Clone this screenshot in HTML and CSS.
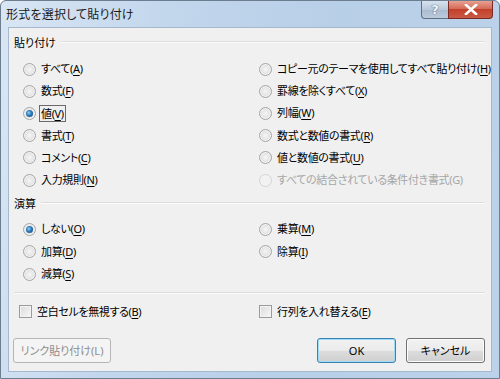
FILE: index.html
```html
<!DOCTYPE html>
<html lang="ja">
<head>
    <meta charset="UTF-8">
    <meta name="viewport" content="width=device-width, initial-scale=1.0">
    <title>形式を選択して貼り付け</title>
    <link rel="stylesheet" href="styles.css">
</head>
<body>
    <div class="window">
        <div class="titlebar">
            <span class="title">形式を選択して貼り付け</span>
            <div class="caption-buttons">
                <span class="cap-btn help">?</span>
                <span class="cap-btn close">
                    <svg width="14" height="11" viewBox="0 0 14 11">
                        <path d="M2 1 L12 10 M12 1 L2 10" stroke="#fff" stroke-width="2.6" stroke-linecap="square"/>
                    </svg>
                </span>
            </div>
        </div>

        <div class="client">
            <div class="group-title first">貼り付け</div>
            <div class="options paste">
                <label class="opt"><span class="radio"></span><span>すべて(<u>A</u>)</span></label>
                <label class="opt"><span class="radio"></span><span>コピー元のテーマを使用してすべて貼り付け(<u>H</u>)</span></label>
                <label class="opt"><span class="radio"></span><span>数式(<u>F</u>)</span></label>
                <label class="opt"><span class="radio"></span><span>罫線を除くすべて(<u>X</u>)</span></label>
                <label class="opt"><span class="radio checked"></span><span class="focus">値(<u>V</u>)</span></label>
                <label class="opt"><span class="radio"></span><span>列幅(<u>W</u>)</span></label>
                <label class="opt"><span class="radio"></span><span>書式(<u>T</u>)</span></label>
                <label class="opt"><span class="radio"></span><span>数式と数値の書式(<u>R</u>)</span></label>
                <label class="opt"><span class="radio"></span><span>コメント(<u>C</u>)</span></label>
                <label class="opt"><span class="radio"></span><span>値と数値の書式(<u>U</u>)</span></label>
                <label class="opt"><span class="radio"></span><span>入力規則(<u>N</u>)</span></label>
                <label class="opt disabled"><span class="radio"></span><span>すべての結合されている条件付き書式(G)</span></label>
            </div>

            <div class="group-title second">演算</div>
            <div class="options ops">
                <label class="opt"><span class="radio checked"></span><span>しない(<u>O</u>)</span></label>
                <label class="opt"><span class="radio"></span><span>乗算(<u>M</u>)</span></label>
                <label class="opt"><span class="radio"></span><span>加算(<u>D</u>)</span></label>
                <label class="opt"><span class="radio"></span><span>除算(<u>I</u>)</span></label>
                <label class="opt"><span class="radio"></span><span>減算(<u>S</u>)</span></label>
            </div>

            <div class="separator"></div>

            <div class="options checks">
                <label class="opt"><span class="checkbox"></span><span>空白セルを無視する(<u>B</u>)</span></label>
                <label class="opt"><span class="checkbox"></span><span>行列を入れ替える(<u>E</u>)</span></label>
            </div>

            <div class="buttons">
                <button class="btn link" disabled>リンク貼り付け(L)</button>
                <div class="spacer"></div>
                <button class="btn default">OK</button>
                <button class="btn">キャンセル</button>
            </div>
        </div>
    </div>
</body>
</html>
```

FILE: styles.css
```css
html, body {
    margin: 0;
    padding: 0;
}
body {
    font-family: "Noto Sans", "Noto Sans CJK JP", sans-serif;
    font-size: 11px;
    color: #000;
    font-feature-settings: "palt";
}
.window {
    width: 500px;
    height: 379px;
    box-sizing: border-box;
    border: 1px solid #6d7d90;
    border-radius: 6px 6px 0 0;
    background: linear-gradient(100deg, #d9e6f4 0%, #c2d6ec 30%, #b8cfe8 60%, #bcd2ea 100%);
    display: flex;
    flex-direction: column;
    overflow: hidden;
}
.titlebar {
    height: 26px;
    display: flex;
    align-items: flex-start;
    justify-content: space-between;
    flex-shrink: 0;
}
.title {
    padding: 5px 0 0 5px;
    line-height: 16px;
    font-family: "Noto Sans CJK JP", sans-serif;
    font-size: 12px;
    color: #1a1a1a;
    letter-spacing: 0.2px;
}
.caption-buttons {
    display: flex;
    margin-right: 6px;
}
.cap-btn {
    height: 18px;
    display: flex;
    align-items: center;
    justify-content: center;
    box-sizing: border-box;
    border: 1px solid #5e6f84;
    border-top: none;
}
.help {
    width: 27px;
    border-radius: 0 0 0 4px;
    border-right: none;
    background: linear-gradient(#d7e2ee, #b9c9da 50%, #a9bbcf 51%, #bccbdc);
    color: #f4f8fb;
    font-family: "DejaVu Sans", sans-serif;
    font-weight: bold;
    font-size: 13px;
    text-shadow: 0 0 1px #4a5c72, 0 0 1px #4a5c72;
}
.close {
    width: 45px;
    border-radius: 0 0 4px 0;
    border-color: #7a2a22;
    background: linear-gradient(#e8a192, #d46b58 45%, #c4402b 50%, #c85a44 100%);
}
.client {
    flex: 1;
    margin: 0 7px 6px 7px;
    border: 1px solid #a5b8cd;
    background: #f0f0f0;
    padding: 0 6px 0 5px;
    display: flex;
    flex-direction: column;
}
.group-title {
    display: flex;
    align-items: center;
    height: 16px;
    gap: 5px;
    font-family: "Noto Sans CJK JP", sans-serif;
}
.group-title.first {
    margin-top: 6px;
}
.group-title.second {
    margin-top: 4px;
}
.group-title::after {
    content: "";
    flex: 1;
    height: 0;
    border-top: 1px solid #dcdcdc;
    border-bottom: 1px solid #fcfcfc;
}
.options {
    display: grid;
    grid-template-columns: 236px 1fr;
    padding-left: 9px;
}
.paste {
    margin-top: 8px;
    grid-auto-rows: 22.2px;
}
.ops {
    margin-top: 7px;
    grid-auto-rows: 22.5px;
}
.checks {
    margin-top: 9px;
    grid-auto-rows: 18px;
}
.opt {
    display: flex;
    align-items: center;
    gap: 4px;
    white-space: nowrap;
    line-height: 16px;
    letter-spacing: -0.35px;
}
.opt u {
    text-decoration-thickness: 1px;
    text-underline-offset: 2px;
}
.opt.disabled {
    color: #a6a6a6;
}
.radio {
    width: 13px;
    height: 13px;
    box-sizing: border-box;
    border-radius: 50%;
    border: 1px solid #a5a5a5;
    background: radial-gradient(circle at 50% 50%, #f6f6f6 0%, #e3e3e3 55%, #d2d2d2 100%);
    box-shadow: inset 0 0 0 1px #f4f4f4;
    position: relative;
    flex-shrink: 0;
    margin-right: 1px;
}
.disabled .radio {
    border-color: #d4d4d4;
    background: #f2f2f2;
    box-shadow: none;
}
.radio.checked::after {
    content: "";
    position: absolute;
    left: 2px;
    top: 2px;
    width: 7px;
    height: 7px;
    border-radius: 50%;
    background: radial-gradient(circle at 40% 40%, #8fd0f4 0%, #2c79b8 45%, #123e70 100%);
}
.focus {
    border: 1px solid #6a6a6a;
    padding: 0 1px;
    margin-left: -2px;
    line-height: 15px;
}
.checkbox {
    width: 13px;
    height: 13px;
    box-sizing: border-box;
    border: 1px solid #9a9a9a;
    background: linear-gradient(135deg, #dcdcdc, #f6f6f6);
    box-shadow: inset 0 0 0 1px #f4f4f4;
    margin-right: 1px;
    flex-shrink: 0;
}
.checks .opt:first-child {
    margin-left: -4px;
}
.separator {
    margin-top: 6px;
    border-top: 1px solid #dcdcdc;
    border-bottom: 1px solid #fcfcfc;
}
.buttons {
    display: flex;
    align-items: center;
    gap: 10px;
    margin-top: 17px;
}
.spacer {
    flex: 1;
}
.btn {
    height: 25px;
    box-sizing: border-box;
    font-family: "Noto Sans", "Noto Sans CJK JP", sans-serif;
    font-feature-settings: "palt";
    font-size: 11px;
    border: 1px solid #707070;
    border-radius: 3px;
    background: linear-gradient(#f2f2f2 0%, #ebebeb 50%, #dddddd 51%, #cfcfcf 100%);
    box-shadow: inset 0 0 0 1px #fcfcfc;
    width: 79px;
    padding: 0;
    color: #000;
}
.btn.link {
    width: 98px;
    margin-left: -1px;
    color: #8d8d8d;
    border-color: #b6b6b6;
    background: #f4f4f4;
    box-shadow: none;
}
.btn.default {
    border-color: #3c7fb1;
    box-shadow: inset 0 0 0 1px #9edcf5;
}
```
